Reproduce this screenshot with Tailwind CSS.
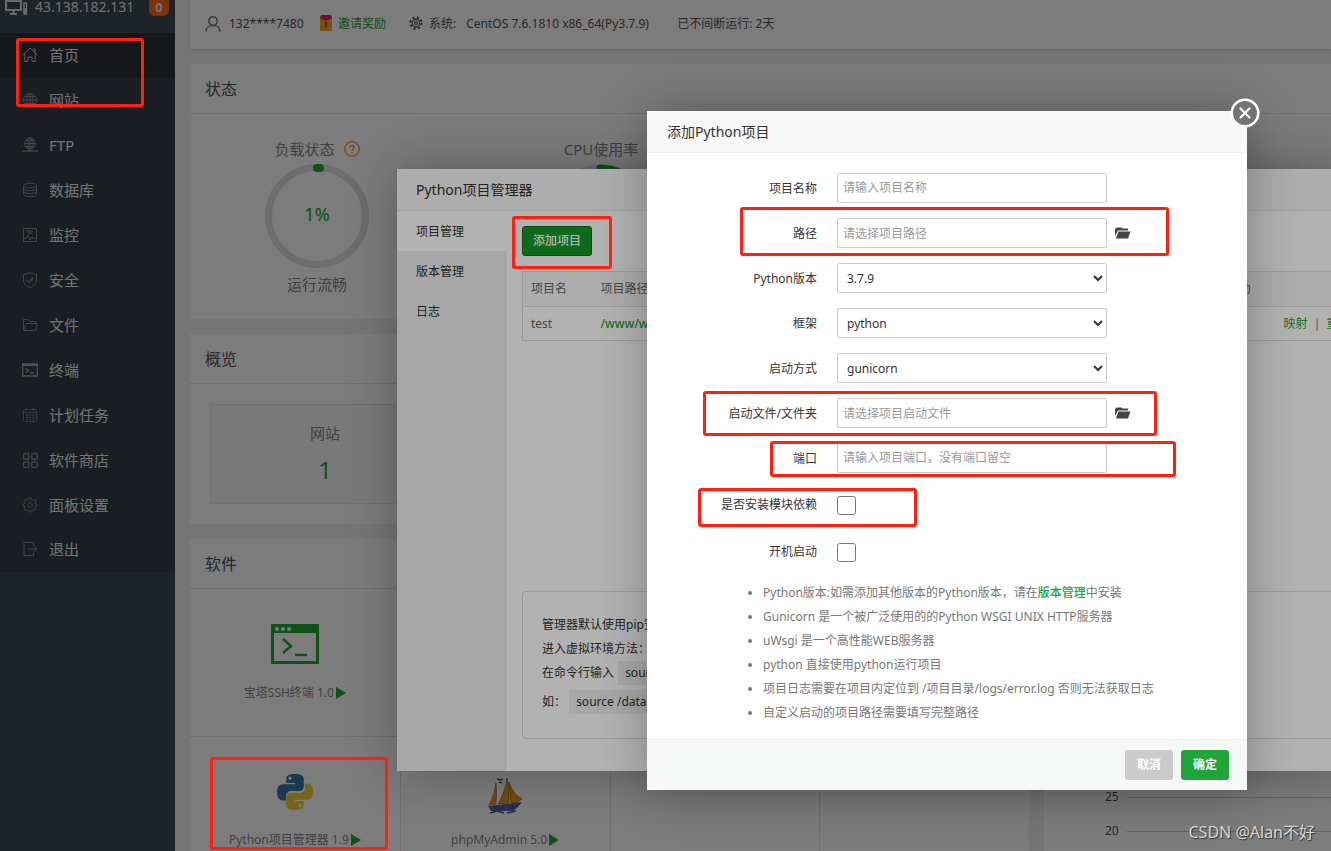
<!DOCTYPE html>
<html lang="zh-CN">
<head>
<meta charset="utf-8">
<title>宝塔面板</title>
<script src="https://cdn.jsdelivr.net/npm/@tailwindcss/browser@4"></script>
</head>
<body class="relative h-screen overflow-hidden bg-[#f1f1f1] font-['Noto_Sans','Noto_Sans_CJK_SC',sans-serif] text-xs text-[#555]">

<div class="flex h-full">
  <!-- Sidebar -->
  <aside class="h-full w-[175px] shrink-0 bg-[#3d4a51]">
    <header class="flex h-[33px] items-start pl-[5px] pr-[6px]">
      <svg class="h-4 w-6 shrink-0" viewBox="0 0 24 16" fill="none" stroke="#d8d8d8" stroke-width="2"><path d="M1 1V10H16V1ZM8.500 10V14M5 14H12"/><rect x="19" y="3" width="2.500" height="11" stroke-width="1.500"/><path d="M20 8V14" stroke-width="2.500"/></svg>
      <span class="ml-[6px] text-sm leading-[14px] text-[#e8e8e8]">43.138.182.131</span>
      <span class="-mt-1 ml-auto h-5 w-5 rounded-md bg-[#ff6a1a] text-center text-[13px] font-bold leading-[22px] text-[#eee]">0</span>
    </header>
    <nav class="bg-[#373e47] text-[15px] text-[#ededed]">
      <a href="#" class="flex h-[45px] items-center gap-[11px] bg-[#2d3038] pb-[2px] pl-[22px]"><svg class="h-4 w-4" viewBox="0 0 16 16" fill="none" stroke="#c4c4c4"><path d="M.8 8 8 1l7.200 7M2.800 6.500V14.500H6V10H10V14.500H13.200V6.500M11 2H13V5.500"/></svg>首页</a>
      <a href="#" class="flex h-[45px] items-center gap-[11px] pb-[2px] pl-[22px]"><svg class="h-4 w-4" viewBox="0 0 16 16" fill="none" stroke="#8b8f93"><circle cx="8" cy="8" r="6.500"/><ellipse cx="8" cy="8" rx="3" ry="6.500"/><path d="M8 1.500V14.500M1.500 8H14.500M2.500 4.500H13.500M2.500 11.500H13.500"/></svg>网站</a>
      <a href="#" class="flex h-[45px] items-center gap-[11px] pb-[2px] pl-[22px]"><svg class="h-4 w-4" viewBox="0 0 16 16" fill="none" stroke="#8b8f93"><circle cx="8" cy="6.500" r="5.500"/><ellipse cx="8" cy="6.500" rx="2.500" ry="5.500"/><path d="M8 1V14M2.500 6.500H13.500M3.500 3.500H12.500M3.500 9.500H12.500"/><path d="M0 14H16" stroke-width="1.500"/></svg>FTP</a>
      <a href="#" class="flex h-[45px] items-center gap-[11px] pb-[2px] pl-[22px]"><svg class="h-4 w-4" viewBox="0 0 16 16" fill="none" stroke="#8b8f93"><ellipse cx="8" cy="3.500" rx="6.500" ry="2.300"/><path d="M1.500 3.500V12.500C1.500 15.300 14.500 15.300 14.500 12.500V3.500M1.500 6.500C1.500 9.300 14.500 9.300 14.500 6.500M1.500 9.500C1.500 12.300 14.500 12.300 14.500 9.500"/></svg>数据库</a>
      <a href="#" class="flex h-[45px] items-center gap-[11px] pb-[2px] pl-[22px]"><svg class="h-4 w-4" viewBox="0 0 16 16" fill="none" stroke="#8b8f93"><path d="M1.500 1.500H14.500V14.500H1.500ZM2 11.500H4L6 8.500L8 13L10 9.500L11.500 12L14 11M5 4H11M6 6H10"/></svg>监控</a>
      <a href="#" class="flex h-[45px] items-center gap-[11px] pb-[2px] pl-[22px]"><svg class="h-4 w-4" viewBox="0 0 16 16" fill="none" stroke="#8b8f93"><path d="M8 .8 14.500 2.500V8C14.500 12 11 14.500 8 15.500C5 14.500 1.500 12 1.500 8V2.500Z"/><path d="m4.500 8 2.500 2.500 4.500-5" stroke-width="1.400"/></svg>安全</a>
      <a href="#" class="flex h-[45px] items-center gap-[11px] pb-[2px] pl-[22px]"><svg class="h-4 w-4" viewBox="0 0 16 16" fill="none" stroke="#8b8f93"><path d="M1.500 13.500V2.500H6L7.500 4.500H13.500V6.500M1.500 13.500H13.500L15.500 6.500H4.500L1.500 13"/></svg>文件</a>
      <a href="#" class="flex h-[45px] items-center gap-[11px] pb-[2px] pl-[22px]"><svg class="h-4 w-4" viewBox="0 0 16 16" fill="none" stroke="#a0a4a8"><path d="M.7 2H15.300V14H.7Z" stroke-width="1.300"/><path d="M.7 3H15.300" stroke-width="2"/><path d="M3.500 6.500 6.500 8.500 3.500 10.500M8 11H12" stroke-width="1.300"/></svg>终端</a>
      <a href="#" class="flex h-[45px] items-center gap-[11px] pb-[2px] pl-[22px]"><svg class="h-4 w-4" viewBox="0 0 16 16" fill="none" stroke="#73777b"><rect x="1.500" y="2.500" width="13" height="12" rx="1.500"/><path d="M1.500 5.500H14.500M4.500 .5V3.500M11.500 .5V3.500"/><path d="M4 8H12.500M4 10.300H12.500M4 12.500H12.500" stroke-dasharray="2 1.200" stroke-width="1.300"/></svg>计划任务</a>
      <a href="#" class="flex h-[45px] items-center gap-[11px] pb-[2px] pl-[22px]"><svg class="h-4 w-4" viewBox="0 0 16 16" fill="none" stroke="#8b8f93" stroke-width="1.300"><rect x="1.500" y="1.500" width="5.500" height="5.500" rx="1"/><rect x="9.800" y="1.500" width="5.500" height="5.500" rx="1"/><rect x="1.500" y="9.800" width="5.500" height="5.500" rx="1"/><rect x="9.800" y="9.800" width="5.500" height="5.500" rx="1"/></svg>软件商店</a>
      <a href="#" class="flex h-[45px] items-center gap-[11px] pb-[2px] pl-[22px]"><svg class="h-4 w-4" viewBox="0 0 16 16" fill="none" stroke="#83878b"><path d="M6.800 1H9.200L9.700 3L11 3.600L12.800 2.500L14 4L13 5.800L13.400 7L15 7.400V9L13.300 9.500L12.700 11L13.600 12.700L12 14L10.400 13L9.400 13.300L8.800 15H7L6.500 13.300L5 12.700L3.300 13.600L2 12L3 10.400L2.600 9.200L1 8.700V7L2.700 6.500L3.300 5L2.400 3.500L4 2.400L5.500 3.300L6.500 3Z"/><circle cx="8" cy="8" r="2.300"/></svg>面板设置</a>
      <a href="#" class="flex h-[44px] items-center gap-[11px] pb-[2px] pl-[22px]"><svg class="h-4 w-4" viewBox="0 0 16 16" fill="none" stroke="#8b8f93"><path d="M11.500 5V1.500H2V14.500H11.500V11M6 8H14.500M12 5.500 14.500 8 12 10.500"/></svg>退出</a>
    </nav>
  </aside>

  <!-- Main content -->
  <main class="flex min-w-0 flex-1 flex-col gap-[15px] overflow-hidden pl-[15px]">
    <div class="flex h-[49px] shrink-0 items-center bg-white pb-[2px] pl-[15px] shadow-sm">
      <svg class="h-4 w-4" viewBox="0 0 16 16" fill="none" stroke="#777" stroke-width="1.500"><circle cx="8" cy="5" r="4.200"/><path d="M1 15.500C1 7.500 15 7.500 15 15.500"/></svg>
      <span class="ml-2 w-[91px]">132****7480</span>
      <svg class="-mt-[2px] h-4 w-3" viewBox="0 0 12 16"><rect y="1" width="12" height="15" rx="1.500" fill="#f5a623"/><path d="M1 0H11L12 3Q6 8 0 3Z" fill="#e0245e"/><path d="M6 6.500A1.500 1.500 0 0 1 7 9L6.700 12.500H5.300L5 9A1.500 1.500 0 0 1 6 6.500Z" fill="#e0245e"/></svg>
      <a href="#" class="ml-[6px] text-[#20a53a]">邀请奖励</a>
      <svg class="-mt-[2px] ml-[23px] h-[14px] w-[14px]" viewBox="0 0 16 16" fill="none" stroke="#666"><circle cx="8" cy="8" r="6.300" stroke-width="2.600" stroke-dasharray="2.600 2.350"/><circle cx="8" cy="8" r="4.300" stroke-width="1.500"/><circle cx="8" cy="8" r="1.500" stroke-width="1.500"/></svg>
      <span class="ml-[6px]">系统:</span>
      <span class="ml-[10px] w-[211px] whitespace-nowrap">CentOS 7.6.1810 x86_64(Py3.7.9)</span>
      <span>已不间断运行: 2天</span>
    </div>

    <section class="h-[255px] shrink-0 bg-white">
      <h2 class="flex h-[50px] items-center border-b border-[#e4e4e4] pl-[15px] text-base">状态</h2>
      <div class="flex gap-[180px] pl-[75px] pt-[25px] text-[15px] leading-5 text-[#888]">
        <div class="flex w-[104px] flex-col items-center">
          <div class="flex items-center gap-[9px] whitespace-nowrap">负载状态
            <svg class="h-4 w-4" viewBox="0 0 16 16" fill="none" stroke="#ff8c1a" stroke-width="1.200"><circle cx="8" cy="8" r="7.300"/><path d="M6 6.500C6 3.800 10 3.800 10 6.300C10 8 8 7.800 8 9.800M8 11V12.300"/></svg>
          </div>
          <div class="relative mt-[5px] flex h-[104px] w-[104px] items-center justify-center rounded-full border-[7px] border-[#e0e0e0] pb-1 text-lg text-[#20a53a]">
            1%<span class="absolute left-[41px] top-[-7px] h-2 w-[11px] rounded bg-[#20a53a]"></span>
          </div>
          <div class="mt-[6px]">运行流畅</div>
        </div>
        <div class="flex w-[104px] flex-col items-center">
          <div class="whitespace-nowrap">CPU使用率</div>
          <svg class="mt-[5px] h-[104px] w-[104px]" viewBox="0 0 104 104" fill="none" stroke-width="7"><circle cx="52" cy="52" r="48" stroke="#e0e0e0"/><path d="M51 4A48 48 0 0 1 92 27" stroke="#20a53a" stroke-linecap="round"/></svg>
        </div>
      </div>
    </section>

    <section class="h-[190px] shrink-0 bg-white">
      <h2 class="flex h-[50px] items-center border-b border-[#e4e4e4] pl-[15px] text-base">概览</h2>
      <div class="p-5">
        <div class="flex h-[100px] w-[230px] flex-col items-center border border-[#e8e8e8] bg-[#fafafa] pt-4 text-[15px] leading-6 text-[#888]">网站
          <a href="#" class="mt-[9px] text-2xl leading-8 text-[#20a53a]">1</a>
        </div>
      </div>
    </section>

    <div class="grid min-h-0 flex-1 grid-cols-[839px_1fr] gap-[15px]">
      <section class="bg-white">
        <h2 class="flex h-[50px] items-center border-b border-[#e4e4e4] pl-[15px] text-base">软件</h2>
        <div class="grid grid-cols-4 text-[#888]">
          <div class="flex h-[148px] flex-col items-center border-b border-[#e4e4ec] pt-[35px]">
            <svg class="h-10 w-12" viewBox="0 0 48 40"><rect width="48" height="40" rx="1" fill="#20a53a"/><rect x="3" y="9" width="42" height="28" fill="#fff"/><g fill="#fff"><circle cx="6" cy="5" r="2"/><circle cx="12" cy="5" r="2"/><circle cx="18" cy="5" r="2"/></g><path d="M12 15 20 22 12 29M24 31H36" fill="none" stroke="#20a53a" stroke-width="2.400"/></svg>
            <div class="mt-[21px] flex items-center leading-4">宝塔SSH终端 1.0<svg class="ml-[2px] h-3 w-[10px]" viewBox="0 0 10 12"><path d="M0 0 10 6 0 12Z" fill="#20a53a"/></svg></div>
          </div>
          <div class="border-b border-l border-[#e4e4ec]"></div><div class="border-b border-l border-[#e4e4ec]"></div><div class="border-b border-l border-[#e4e4ec]"></div>
          <div class="flex h-[148px] flex-col items-center pt-[37px]">
            <svg class="h-9 w-9" viewBox="0 0 36 36"><path d="M17.800 0C10.500 0 9.300 2.600 9.300 5V9H18.300V10.300H6C2.300 10.300 0 13.300 0 18.200C0 23.500 2.500 26.500 5.800 26.500H9V22C9 19 11.500 17 14.200 17H22C25 17 26.800 15 26.800 12.500V5C26.800 2 24.500 0 17.800 0ZM13 2.600A1.700 1.700 0 1 1 13 6A1.700 1.700 0 0 1 13 2.600Z" fill="#3b76a8"/><path d="M18.200 36C25.500 36 26.700 33.400 26.700 31V27H17.700V25.700H30C33.700 25.700 36 22.700 36 17.800C36 12.500 33.500 9.500 30.200 9.500H28V14C28 17 25.500 19 22.800 19H14C11 19 9.200 21 9.200 23.500V31C9.200 34 11.500 36 18.200 36ZM23 33.400A1.700 1.700 0 1 1 23 30A1.700 1.700 0 0 1 23 33.400Z" fill="#f5cf32"/></svg>
            <div class="mt-[22px] flex items-center leading-4">Python项目管理器 1.9<svg class="ml-[2px] h-3 w-[10px]" viewBox="0 0 10 12"><path d="M0 0 10 6 0 12Z" fill="#20a53a"/></svg></div>
          </div>
          <div class="flex flex-col items-center border-l border-[#e4e4ec] pt-10">
            <svg class="h-[38px] w-9" viewBox="0 0 36 38"><g fill="#ef9a1b" stroke="#7a5a30" stroke-width=".6"><path d="M9 6Q7 20 2 28L9 27Q10 15 9 6Z"/><path d="M20 1Q18 16 11 27L22 26Q23 12 20 1Z"/><path d="M22 5Q26 18 35 22L29 26H24Z"/></g><path d="M1 29 35 25Q31 31 26 34L4 34Z" fill="#5a5fa8"/><path d="M3 36 10 34 17 36M20 36 29 34M10 2 14 3 16 2M12 5 15 6" fill="none" stroke="#55586e" stroke-width="1.400"/></svg>
            <div class="mt-[17px] flex items-center leading-4">phpMyAdmin 5.0<svg class="ml-[2px] h-3 w-[10px]" viewBox="0 0 10 12"><path d="M0 0 10 6 0 12Z" fill="#20a53a"/></svg></div>
          </div>
          <div class="border-l border-[#e4e4ec]"></div><div class="border-l border-[#e4e4ec]"></div>
        </div>
      </section>
      <section class="bg-white pl-[61px] pt-[241px]">
        <div class="flex h-[34px] items-center gap-[8px]"><span>25</span><hr class="flex-1 border-[#ccc]"></div>
        <div class="flex h-[34px] items-center gap-[8px]"><span>20</span><hr class="flex-1 border-[#ccc]"></div>
      </section>
    </div>
  </main>
</div>

<!-- Project manager dialog -->
<div class="absolute inset-0 bg-black/30"></div>
<div role="dialog" aria-label="Python项目管理器" class="absolute -right-5 left-[397px] top-[169px] flex h-[602px] flex-col rounded-sm bg-white text-[#333] shadow-[1px_1px_50px_rgba(0,0,0,0.3)]">
  <h3 class="flex h-[42px] shrink-0 items-center border-b border-[#e6e6e6] bg-[#f8f8f8] pl-[19px] text-sm">Python项目管理器</h3>
  <div class="flex min-h-0 flex-1">
    <nav class="w-[110px] shrink-0 bg-[#f0f0f1]">
      <a href="#" class="flex h-10 items-center bg-white pl-[19px] pt-[2px]">项目管理</a>
      <a href="#" class="flex h-10 items-center pl-[19px] pt-[2px]">版本管理</a>
      <a href="#" class="flex h-10 items-center pl-[19px] pt-[2px]">日志</a>
    </nav>
    <div class="flex flex-1 flex-col pb-8 pl-[15px] pt-[15px]">
      <button class="h-[30px] w-[70px] rounded-[3px] border border-[#10691f] bg-[#159a2b] font-medium text-white">添加项目</button>
      <table class="mt-[15px] w-full table-fixed border-collapse text-left text-[#666]">
        <thead><tr class="h-[35px] border border-[#ddd] bg-[#f8f8f8]"><th class="w-[70px] pl-2 font-normal">项目名</th><th class="w-[614px] pl-2 font-normal">项目路径</th><th class="w-[69px] pl-2 font-normal">自启动</th><th></th></tr></thead>
        <tbody><tr class="h-[34px] border border-[#ddd]"><td class="pl-2">test</td><td class="pl-2 font-medium text-[#20a53a]">/www/wwwroot/test</td><td></td><td class="whitespace-nowrap pl-2 text-[#777]"><a href="#" class="text-[#20a53a]">映射</a>&nbsp; |&nbsp; <a href="#" class="text-[#20a53a]">重启</a></td></tr></tbody>
      </table>
      <div class="mt-auto h-[148px] rounded border border-[#ddd] px-[19px] pt-[21px] leading-6">
        <p>管理器默认使用pip安装模块</p>
        <p>进入虚拟环境方法：</p>
        <p>在命令行输入 <code class="ml-px inline-block bg-[#f0f0f0] px-[7px] font-['Noto_Sans']">source 项目路径/bin/activate</code></p>
        <p class="mt-[5px]">如： <code class="inline-block bg-[#f0f0f0] px-[7px] font-['Noto_Sans']">source /data/test/bin/activate</code></p>
      </div>
    </div>
  </div>
</div>

<!-- Add project dialog -->
<div class="absolute inset-0 bg-black/30"></div>
<form role="dialog" aria-label="添加Python项目" class="absolute left-[647px] top-[111px] w-[600px] rounded-sm bg-white text-[#333] shadow-[1px_1px_50px_rgba(0,0,0,0.3)]">
  <button type="button" aria-label="关闭" class="absolute -right-[13px] -top-[13px] h-[30px] w-[30px]"><svg viewBox="0 0 30 30"><circle cx="15" cy="15" r="13.300" fill="#737373" stroke="#fff" stroke-width="2.600"/><path d="M10.500 10.500 19.500 19.500M19.500 10.500 10.500 19.500" stroke="#fff" stroke-width="2.200" stroke-linecap="round"/></svg></button>
  <h3 class="flex h-[42px] items-center border-b border-[#eee] bg-[#f8f8f8] pl-5 text-sm">添加Python项目</h3>
  <div class="grid grid-cols-[170px_1fr] gap-x-5 gap-y-[13px] pt-5">
    <label for="name" class="text-right leading-8">项目名称</label>
    <div class="flex h-[30px]"><input id="name" placeholder="请输入项目名称" class="w-[270px] rounded-xs border border-[#ccc] px-[5px] placeholder:text-[#999]"></div>
    <label for="path" class="text-right leading-8">路径</label>
    <div class="flex h-[30px] items-center gap-2"><input id="path" placeholder="请选择项目路径" class="h-full w-[270px] rounded-xs border border-[#ccc] px-[5px] placeholder:text-[#999]"><button type="button" aria-label="选择路径"><svg class="h-3 w-4" viewBox="0 0 16 12" fill="#444"><path d="M0 9V1.500H1L2 .5H6.500L7.500 1.500H13V3.500H3Z"/><path d="M3.500 4.500H15.500L13 11.500H.8Z"/></svg></button></div>
    <label for="ver" class="text-right leading-8">Python版本</label>
    <div class="flex h-[30px]"><select id="ver" class="w-[270px] rounded-xs border border-[#ccc] bg-white px-[5px]"><option>3.7.9</option></select></div>
    <label for="fw" class="text-right leading-8">框架</label>
    <div class="flex h-[30px]"><select id="fw" class="w-[270px] rounded-xs border border-[#ccc] bg-white px-[5px]"><option>python</option></select></div>
    <label for="mode" class="text-right leading-8">启动方式</label>
    <div class="flex h-[30px]"><select id="mode" class="w-[270px] rounded-xs border border-[#ccc] bg-white px-[5px]"><option>gunicorn</option></select></div>
    <label for="file" class="text-right leading-8">启动文件/文件夹</label>
    <div class="flex h-[30px] items-center gap-2"><input id="file" placeholder="请选择项目启动文件" class="h-full w-[270px] rounded-xs border border-[#ccc] px-[5px] placeholder:text-[#999]"><button type="button" aria-label="选择文件"><svg class="h-3 w-4" viewBox="0 0 16 12" fill="#444"><path d="M0 9V1.500H1L2 .5H6.500L7.500 1.500H13V3.500H3Z"/><path d="M3.500 4.500H15.500L13 11.500H.8Z"/></svg></button></div>
    <label for="port" class="text-right leading-8">端口</label>
    <div class="flex h-[30px]"><input id="port" placeholder="请输入项目端口，没有端口留空" class="w-[270px] rounded-xs border border-[#ccc] px-[5px] placeholder:text-[#999]"></div>
    <label for="deps" class="text-right leading-[34px]">是否安装模块依赖</label>
    <div class="flex h-[34px] items-center"><input id="deps" type="checkbox" class="h-[19px] w-[19px]"></div>
    <label for="boot" class="text-right leading-[34px]">开机启动</label>
    <div class="flex h-[34px] items-center"><input id="boot" type="checkbox" class="h-[19px] w-[19px]"></div>
  </div>
  <ul class="list-disc pb-[14px] pl-[116px] pt-3 leading-6 text-[#777]">
    <li>Python版本:如需添加其他版本的Python版本，请在<a href="#" class="font-medium text-[#20a53a]">版本管理</a>中安装</li>
    <li>Gunicorn 是一个被广泛使用的的Python WSGI UNIX HTTP服务器</li>
    <li>uWsgi 是一个高性能WEB服务器</li>
    <li>python 直接使用python运行项目</li>
    <li>项目日志需要在项目内定位到 /项目目录/logs/error.log 否则无法获取日志</li>
    <li>自定义启动的项目路径需要填写完整路径</li>
  </ul>
  <footer class="flex justify-end gap-2 border-t border-[#edf0f0] bg-[#f6f8f8] py-[10px] pr-[18px] font-bold text-white">
    <button type="button" class="h-[30px] w-12 rounded-[3px] bg-[#cbcbcb]">取消</button>
    <button type="submit" class="h-[30px] w-12 rounded-[3px] bg-[#20a53a]">确定</button>
  </footer>
</form>

<!-- Highlight frames -->
<div class="pointer-events-none">
  <div class="absolute left-[16px] top-[38px] h-[69px] w-[128px] rounded-[3px] border-3 border-[#ff2012]"></div>
  <div class="absolute left-[512px] top-[216px] h-[53px] w-[100px] rounded-[3px] border-3 border-[#ff2012]"></div>
  <div class="absolute left-[740px] top-[207px] h-[49px] w-[429px] rounded-[3px] border-3 border-[#ff2012]"></div>
  <div class="absolute left-[703px] top-[391px] h-[45px] w-[454px] rounded-[3px] border-3 border-[#ff2012]"></div>
  <div class="absolute left-[770px] top-[441px] h-[36px] w-[406px] rounded-[3px] border-3 border-[#ff2012]"></div>
  <div class="absolute left-[698px] top-[488px] h-[39px] w-[219px] rounded-[3px] border-3 border-[#ff2012]"></div>
  <div class="absolute left-[210px] top-[757px] h-[93px] w-[178px] rounded-[3px] border-3 border-[#ff2012]"></div>
</div>
<div class="absolute bottom-[7px] right-4 text-base leading-6 text-[#d4d4d4] [text-shadow:1px_1px_1px_#333]">CSDN @Alan不好</div>

</body>
</html>
